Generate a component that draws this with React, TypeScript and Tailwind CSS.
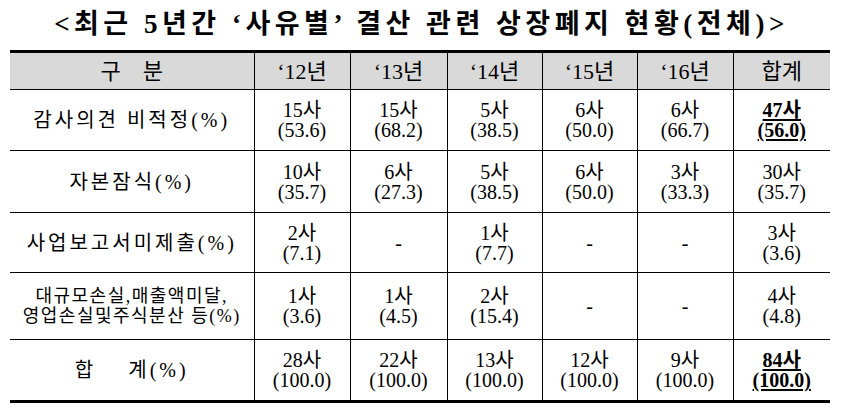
import React from 'react';

type Cell = { n: string; p?: string; bold?: boolean } | null;

const rows: { label: React.ReactNode; cells: Cell[]; h: string }[] = [
  {
    label: '감사의견 비적정(%)',
    h: 'h-[61px]',
    cells: [
      { n: '15사', p: '(53.6)' },
      { n: '15사', p: '(68.2)' },
      { n: '5사', p: '(38.5)' },
      { n: '6사', p: '(50.0)' },
      { n: '6사', p: '(66.7)' },
      { n: '47사', p: '(56.0)', bold: true },
    ],
  },
  {
    label: '자본잠식(%)',
    h: 'h-[62px]',
    cells: [
      { n: '10사', p: '(35.7)' },
      { n: '6사', p: '(27.3)' },
      { n: '5사', p: '(38.5)' },
      { n: '6사', p: '(50.0)' },
      { n: '3사', p: '(33.3)' },
      { n: '30사', p: '(35.7)' },
    ],
  },
  {
    label: '사업보고서미제출(%)',
    h: 'h-[60px]',
    cells: [
      { n: '2사', p: '(7.1)' },
      null,
      { n: '1사', p: '(7.7)' },
      null,
      null,
      { n: '3사', p: '(3.6)' },
    ],
  },
  {
    label: (
      <span className="block text-[18px] leading-[20px] tracking-[1.5px]">
        대규모손실,매출액미달,
        <br />
        영업손실및주식분산 등(%)
      </span>
    ),
    h: 'h-[67px]',
    cells: [
      { n: '1사', p: '(3.6)' },
      { n: '1사', p: '(4.5)' },
      { n: '2사', p: '(15.4)' },
      null,
      null,
      { n: '4사', p: '(4.8)' },
    ],
  },
  {
    label: <span>합&nbsp;&nbsp;&nbsp;&nbsp;계(%)</span>,
    h: 'h-[62px]',
    cells: [
      { n: '28사', p: '(100.0)' },
      { n: '22사', p: '(100.0)' },
      { n: '13사', p: '(100.0)' },
      { n: '12사', p: '(100.0)' },
      { n: '9사', p: '(100.0)' },
      { n: '84사', p: '(100.0)', bold: true },
    ],
  },
];

const years = ['‘12년', '‘13년', '‘14년', '‘15년', '‘16년', '합계'];
const widths = ['w-[96px]', 'w-[97px]', 'w-[95px]', 'w-[95px]', 'w-[96px]', 'w-[97px]'];

const font = "font-['Liberation_Serif','Noto_Sans_CJK_KR',serif]";

export default function App() {
  return (
    <div className={`w-[843px] h-[419px] bg-white text-black ${font}`}>
      <h1 className="pt-[8px] h-[50px] text-center text-[27px] font-bold tracking-[4.5px] leading-[32px]">
        &lt;최근 5년간 ‘사유별’ 결산 관련 상장폐지 현황(전체)&gt;
      </h1>
      <table className="ml-[10px] w-[820px] border-collapse table-fixed">
        <thead>
          <tr className="h-[38px] bg-[#d9d9d9] border-t-[3px] border-black border-b">
            <th className="w-[244px] font-normal text-[22px] border-r border-black">구&nbsp;&nbsp;&nbsp;&nbsp;분</th>
            {years.map((y, i) => (
              <th
                key={y}
                className={`${widths[i]} font-normal text-[22px] ${i < 5 ? 'border-r border-black' : ''}`}
              >
                {y}
              </th>
            ))}
          </tr>
        </thead>
        <tbody>
          {rows.map((r, ri) => (
            <tr
              key={ri}
              className={`${r.h} border-black ${ri === rows.length - 1 ? 'border-b-[3px]' : 'border-b'}`}
            >
              <td className="text-center text-[20px] tracking-[3px] border-r border-black">{r.label}</td>
              {r.cells.map((c, ci) => (
                <td
                  key={ci}
                  className={`text-center text-[20px] leading-[20px] ${ci < 5 ? 'border-r border-black' : ''}`}
                >
                  {c ? (
                    <div className={c.bold ? 'font-bold' : ''}>
                      <div className={c.bold ? 'underline underline-offset-2' : ''}>{c.n}</div>
                      <div className={c.bold ? 'underline underline-offset-2' : ''}>{c.p}</div>
                    </div>
                  ) : (
                    '-'
                  )}
                </td>
              ))}
            </tr>
          ))}
        </tbody>
      </table>
    </div>
  );
}
